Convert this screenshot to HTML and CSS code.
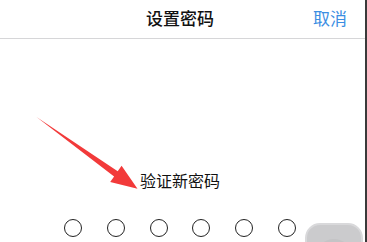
FILE: index.html
```html
<!DOCTYPE html>
<html lang="zh">
<head>
<meta charset="utf-8">
<title>设置密码</title>
<link rel="stylesheet" href="styles.css">
</head>
<body>
<div class="screen">
  <header class="navbar">
    <span></span>
    <h1 class="title">设置密码</h1>
    <a class="cancel">取消</a>
  </header>
  <main class="content">
    <p class="prompt">验证新密码</p>
    <div class="dots">
      <span class="dot"></span><span class="dot"></span><span class="dot"></span>
      <span class="dot"></span><span class="dot"></span><span class="dot"></span>
    </div>
  </main>
  <svg class="arrow" width="367" height="242" viewBox="0 0 367 242">
    <polygon points="36.5,117 117.7,171.2 121.6,165.8 137.5,188.8 110.2,182 114.1,176.6" fill="#f23a3a"/>
  </svg>
  <div class="assist"><div class="assist-inner"></div></div>
</div>
</body>
</html>
```
FILE: styles.css
```css
html, body {
  margin: 0;
  padding: 0;
  background: #fff;
}
body {
  font-family: "Noto Sans CJK SC", "Noto Sans", sans-serif;
  overflow: hidden;
}
.screen {
  position: relative;
  width: 365px;
  height: 242px;
  border-right: 2px solid #3a3a3a;
  overflow: hidden;
  display: flex;
  flex-direction: column;
}
.navbar {
  height: 38px;
  border-bottom: 1px solid #d6d6d8;
  display: grid;
  grid-template-columns: 1fr auto 1fr;
  align-items: center;
  padding-right: 5px;
}
.title {
  margin: 0;
  font-size: 17px;
  font-weight: 500;
  color: #111;
  line-height: 20px;
  margin-top: -3px;
}
.cancel {
  justify-self: end;
  margin-right: 13px;
  font-size: 17px;
  color: #3b8ee2;
  line-height: 20px;
  margin-top: -3px;
}
.content {
  flex: 1;
  display: flex;
  flex-direction: column;
  align-items: center;
  padding-right: 5px;
  padding-top: 131px;
}
.prompt {
  margin: 0;
  font-size: 16px;
  line-height: 20px;
  color: #111;
}
.dots {
  display: flex;
  gap: 24.8px;
  margin-top: 29px;
}
.dot {
  width: 16px;
  height: 16px;
  border: 1.3px solid #222;
  border-radius: 50%;
}
.arrow {
  position: absolute;
  left: 0;
  top: 0;
}
.assist {
  position: absolute;
  left: 305px;
  top: 223px;
  width: 54px;
  height: 54px;
  border-radius: 15px;
  border: 2px solid #d9d9db;
  background: #cbcbcd;
  display: flex;
  align-items: center;
  justify-content: center;
}
.assist-inner {
  width: 38px;
  height: 38px;
  margin-top: 12px;
  border-radius: 50%;
  background: #c4c4c6;
}
```
